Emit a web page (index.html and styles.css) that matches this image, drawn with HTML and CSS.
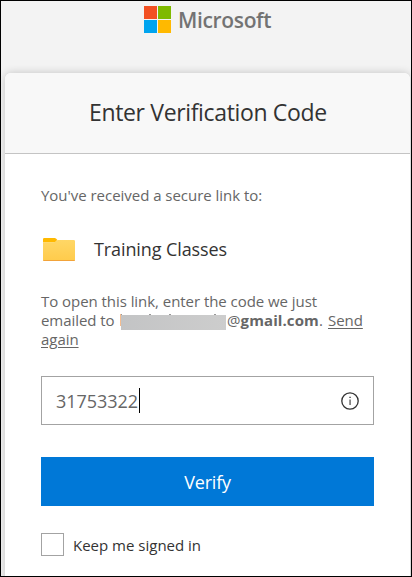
FILE: index.html
```html
<!DOCTYPE html>
<html lang="en">

<head>
    <meta charset="UTF-8">
    <meta name="viewport" content="width=device-width, initial-scale=1.0">
    <title>Enter Verification Code</title>
    <link rel="stylesheet" href="styles.css">
</head>

<body>
    <div class="page">
        <div class="brand">
            <svg class="brand-logo" width="27" height="27" viewBox="0 0 27 27">
                <rect width="13" height="13" fill="#f25022"/>
                <rect x="14" width="13" height="13" fill="#7fba00"/>
                <rect y="14" width="13" height="13" fill="#00a4ef"/>
                <rect x="14" y="14" width="13" height="13" fill="#ffb900"/>
            </svg>
            <span class="brand-name">Microsoft</span>
        </div>
        <div class="card">
            <div class="card-header">
                <h1>Enter Verification Code</h1>
            </div>
            <form class="card-body">
                <p class="intro">You've received a secure link to:</p>
                <div class="item">
                    <svg class="folder" width="32" height="23" viewBox="0 0 32 23">
                        <defs>
                            <linearGradient id="folder-fill" x1="0" y1="0" x2="0" y2="1">
                                <stop offset="0" stop-color="#ffd766"/>
                                <stop offset="1" stop-color="#ffcb4b"/>
                            </linearGradient>
                        </defs>
                        <path d="M0 1.2Q0 0 1.2 0H11.6Q12.4 0 13 .6L14.4 2L12 4.6H0Z" fill="#ffb900"/>
                        <path d="M0 4.4H10.6Q11.6 4.4 12.3 3.7L13.4 2.6Q14 2 15 2H30.8Q32 2 32 3.2V21.8Q32 23 30.8 23H1.2Q0 23 0 21.8Z" fill="url(#folder-fill)"/>
                        <path d="M0 22H32Q32 23 30.8 23H1.2Q0 23 0 22Z" fill="#f2a33a"/>
                    </svg>
                    <span class="item-name">Training Classes</span>
                </div>
                <p class="hint">
                    <span class="line">To open this link, enter the code we just</span>
                    <span class="line"><span class="emailed">emailed to</span><svg class="mask" width="106" height="17" viewBox="0 0 106 17">
                            <defs>
                                <linearGradient id="mask-fill">
                                    <stop offset="0" stop-color="#c3c4c5"/>
                                    <stop offset="1" stop-color="#cdcdcd"/>
                                </linearGradient>
                            </defs>
                            <path d="M0 1H1V13H0Z" fill="#f5bd90"/>
                            <path d="M1 1H2V2H1ZM29 1H31V2H29ZM49 1H51V2H49ZM94 1H96V2H94Z" fill="#999"/>
                            <rect x="1" y="2" width="105" height="15" fill="url(#mask-fill)"/>
                        </svg><span class="domain">@<b>gmail.com</b></span><span class="dot">.</span><a class="send" href="#">Send</a></span>
                    <span class="line"><a class="again" href="#">again</a></span>
                </p>
                <div class="code-field">
                    <span class="code">31753322</span>
                    <span class="caret"></span>
                    <svg class="info" width="18" height="18" viewBox="0 0 18 18">
                        <circle cx="9" cy="9" r="8.2" fill="none" stroke="#333" stroke-width="1.3"/>
                        <path d="M8.4 4.8H9.7V6.1H8.4ZM8.5 7.4H9.6V13H8.5Z" fill="#333"/>
                    </svg>
                </div>
                <button class="verify" type="button">Verify</button>
                <label class="keep">
                    <input class="keep-box" type="checkbox">
                    <span class="keep-text">Keep me signed in</span>
                </label>
            </form>
        </div>
    </div>
</body>

</html>
```
FILE: styles.css
```css
* {
    margin: 0;
    padding: 0;
    box-sizing: border-box;
}

body {
    font-family: "Open Sans", "Noto Sans", sans-serif;
    font-size: 15px;
    color: #666;
}

.page {
    width: 412px;
    height: 577px;
    border: 1px solid #000;
    background: #f3f3f3;
    overflow: hidden;
}

.brand {
    display: flex;
    height: 72px;
    padding: 5px 0 0 143px;
}

.brand-name {
    margin-left: 7px;
    font-size: 21px;
    font-weight: 600;
    line-height: 28px;
    letter-spacing: -0.35px;
    color: #737373;
}

.card {
    width: 405px;
    height: 520px;
    margin-left: 4px;
    border-radius: 6px;
    background: #fff;
    box-shadow: 0 0 8px rgba(0, 0, 0, 0.2);
    overflow: hidden;
}

.card-header {
    height: 81px;
    padding: 23px 0 0 84px;
    background: #f8f8f8;
    border-bottom: 1px solid #c4c4c4;
}

.card-header h1 {
    font-size: 23px;
    font-weight: 400;
    line-height: 32px;
    letter-spacing: -0.35px;
    color: #333;
    white-space: nowrap;
}

.card-body {
    padding: 31px 36px 0;
}

.intro {
    line-height: 20px;
    letter-spacing: -0.03px;
}

.item {
    display: flex;
    align-items: center;
    height: 24px;
    margin: 32px 0 0 2px;
}

.item-name {
    margin-left: 19px;
    font-size: 18px;
    letter-spacing: -0.1px;
    color: #333;
}

.hint {
    margin-top: 30px;
    letter-spacing: -0.05px;
    white-space: nowrap;
}

.line {
    display: flex;
    height: 19px;
    line-height: 21px;
}

.emailed {
    width: 79px;
}

.mask {
    margin-top: 3px;
}

.domain {
    width: 92px;
    margin-left: 1px;
    letter-spacing: 0.1px;
}

.dot {
    width: 9px;
}

.send,
.again {
    color: #666;
    text-decoration: underline;
    text-underline-offset: 2px;
}

.code-field {
    display: flex;
    align-items: center;
    height: 49px;
    margin-top: 28px;
    padding: 0 14px 0 14px;
    border: 1px solid #a3a3a3;
}

.code {
    width: 83px;
    font-size: 18px;
    letter-spacing: -0.05px;
}

.caret {
    width: 1px;
    height: 25px;
    background: #000;
}

.info {
    margin-left: auto;
}

.verify {
    display: block;
    width: 333px;
    height: 49px;
    margin-top: 32px;
    border: 0;
    background: #0078d7;
    font-family: inherit;
    font-size: 18px;
    letter-spacing: -0.2px;
    color: #fff;
}

.keep {
    display: flex;
    align-items: center;
    margin-top: 27px;
    color: #333;
}

.keep-box {
    appearance: none;
    width: 23px;
    height: 23px;
    border: 1px solid #a3a3a3;
    background: #fff;
}

.keep-text {
    margin-left: 9px;
}
```
